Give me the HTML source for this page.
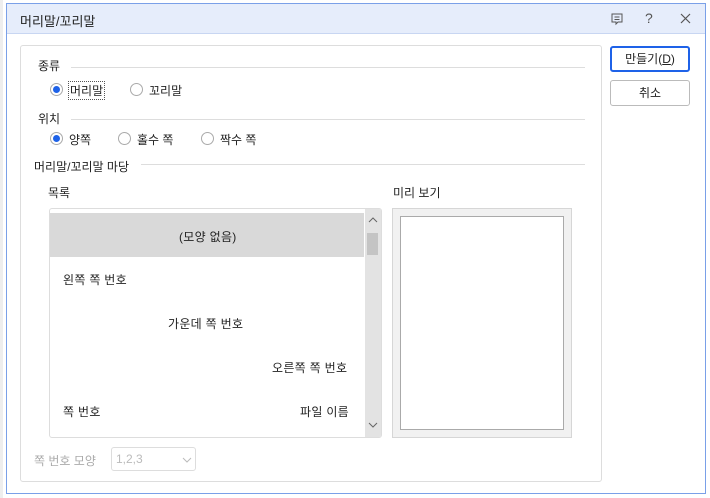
<!DOCTYPE html>
<html><head><meta charset="utf-8"><style>
*{box-sizing:border-box;margin:0;padding:0}
body{width:710px;height:498px;position:relative;background:#fff;font-family:"Liberation Sans","Noto Sans CJK KR",sans-serif;font-size:12px;color:#222;overflow:hidden}
.a{position:absolute}
.dlg{left:6px;top:3px;width:700px;height:491px;border:1px solid #7aa0e8;background:#fff}
.tb{left:0;top:0;width:698px;height:30px;background:#e6edfb;border-bottom:1px solid #c8d6f2}
.grp{left:13px;top:41px;width:582px;height:437px;border:1px solid #ddd;border-radius:3px}
.line{height:1px;background:#ddd}
.rad{width:13px;height:13px;border:1px solid #aaa;border-radius:50%;background:#fff}
.rad.on::after{content:"";position:absolute;left:2px;top:2px;width:7px;height:7px;border-radius:50%;background:#1e62e8}
.btn{width:80px;height:26px;border:1px solid #bbb;border-radius:3px;background:#fff;text-align:center;line-height:24px}
.l span{letter-spacing:0.3px}
</style></head><body>
<div class="a" style="left:0;top:0;width:3px;height:498px;background:#eee"></div>
<div class="a dlg">
 <div class="a tb"><span class="a" style="left:13px;top:7px;font-size:13px">머리말/꼬리말</span>
  <svg class="a" style="left:603px;top:8px" width="14" height="14"><path d="M2 2h10v8H8l-2 2v-2H2z M4.5 5h5M4.5 7.5h5" fill="none" stroke="#555"/></svg>
  <span class="a" style="left:638px;top:6px;font-size:14px;color:#555">?</span>
  <svg class="a" style="left:672px;top:8px" width="13" height="13"><path d="M2 2l9 9M11 2l-9 9" stroke="#555" stroke-width="1.2"/></svg>
 </div>
 <div class="a grp"></div>
 <div class="a btn" style="left:603px;top:42px;border:2px solid #1e62e8;line-height:22px">만들기(<u>D</u>)</div>
 <div class="a btn" style="left:603px;top:76px">취소</div>
 <span class="a" style="left:31px;top:53px">종류</span><div class="a line" style="left:64px;top:63px;width:514px"></div>
 <div class="a rad on" style="left:43px;top:79px"></div>
 <span class="a" style="left:61px;top:77px;border:1px dotted #555;padding:0 1px">머리말</span>
 <div class="a rad" style="left:123px;top:79px"></div><span class="a" style="left:142px;top:78px">꼬리말</span>
 <span class="a" style="left:31px;top:106px">위치</span><div class="a line" style="left:64px;top:115px;width:514px"></div>
 <div class="a rad on" style="left:43px;top:128px"></div><span class="a" style="left:62px;top:127px">양쪽</span>
 <div class="a rad" style="left:111px;top:128px"></div><span class="a" style="left:130px;top:127px">홀수 쪽</span>
 <div class="a rad" style="left:194px;top:128px"></div><span class="a" style="left:213px;top:127px">짝수 쪽</span>
 <span class="a" style="left:27px;top:154px">머리말/꼬리말 마당</span><div class="a line" style="left:134px;top:160px;width:444px"></div>
 <span class="a" style="left:41px;top:180px">목록</span><span class="a" style="left:386px;top:180px">미리 보기</span>
 <div class="a l" style="left:42px;top:204px;width:333px;height:230px;border:1px solid #ddd;border-radius:3px;overflow:hidden">
  <div class="a" style="left:0;top:4px;width:314px;height:44px;background:#d9d9d9"></div>
  <span class="a" style="left:129px;top:19px">(모양 없음)</span>
  <span class="a" style="left:13px;top:62px">왼쪽 쪽 번호</span>
  <span class="a" style="left:118px;top:106px">가운데 쪽 번호</span>
  <span class="a" style="left:222px;top:150px">오른쪽 쪽 번호</span>
  <span class="a" style="left:13px;top:194px">쪽 번호</span><span class="a" style="left:250px;top:194px">파일 이름</span>
  <div class="a" style="left:315px;top:0;width:17px;height:230px;background:#e3e3e3"></div>
  <div class="a" style="left:317px;top:24px;width:11px;height:22px;background:#c4c4c4"></div>
  <svg class="a" style="left:317px;top:6px" width="12" height="10"><path d="M2 7l4-4 4 4" fill="none" stroke="#666"/></svg>
  <svg class="a" style="left:317px;top:211px" width="12" height="10"><path d="M2 3l4 4 4-4" fill="none" stroke="#666"/></svg>
 </div>
 <div class="a" style="left:385px;top:204px;width:180px;height:230px;background:#f1f1f1;border:1px solid #d6d6d6">
  <div class="a" style="left:7px;top:7px;width:164px;height:214px;background:#fff;border:1px solid #aaa"></div>
 </div>
 <span class="a" style="left:27px;top:448px;color:#aaa">쪽 번호 모양</span>
 <div class="a" style="left:104px;top:443px;width:85px;height:24px;border:1px solid #ddd;border-radius:3px;color:#bbb;padding:4px 4px">1,2,3
  <svg class="a" style="left:70px;top:8px" width="10" height="8"><path d="M1 2l4 4 4-4" fill="none" stroke="#bbb"/></svg></div>
</div>
</body></html>
